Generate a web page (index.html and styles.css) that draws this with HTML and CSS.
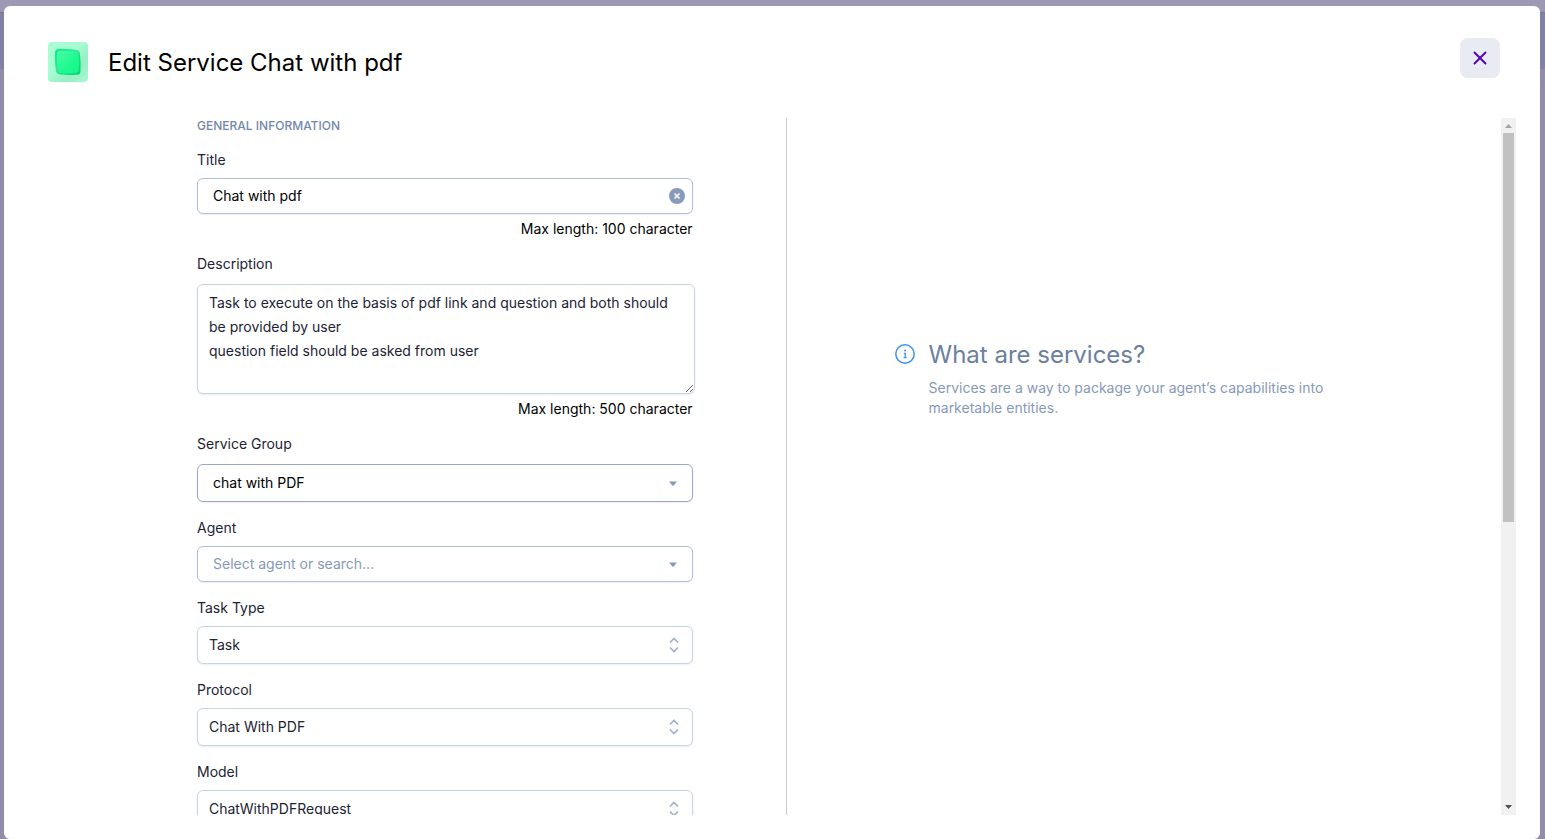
FILE: index.html
```
<!DOCTYPE html>
<html lang="en">
<head>
<meta charset="utf-8">
<title>Edit Service</title>
<meta name="viewport" content="width=device-width, initial-scale=1">
<link rel="stylesheet" href="styles.css">
</head>
<body>
<main class="modal" role="dialog" aria-labelledby="modal-title">
  <header class="modal-header">
    <svg class="service-icon" viewBox="0 0 40 40" aria-hidden="true">
      <defs>
        <linearGradient id="tile" x1="0" y1="0" x2="1" y2="1">
          <stop offset="0.4" stop-color="#a8fdd3"/><stop offset="0.7" stop-color="#98eec3"/><stop offset="1" stop-color="#a8fad2"/>
        </linearGradient>
        <linearGradient id="edge" x1="0" y1="0" x2="1" y2="1">
          <stop offset="0" stop-color="#02f582"/><stop offset="0.3" stop-color="#0cf58a"/><stop offset="0.45" stop-color="#3be39a"/><stop offset="0.6" stop-color="#12e583"/><stop offset="1" stop-color="#05cf70"/>
        </linearGradient>
        <linearGradient id="face" x1="0" y1="0" x2="1" y2="1">
          <stop offset="0" stop-color="#4dfba9"/><stop offset="0.6" stop-color="#1df98f"/><stop offset="1" stop-color="#0ffb87"/>
        </linearGradient>
      </defs>
      <rect width="40" height="40" rx="4" fill="url(#tile)"/>
      <path d="M10.500 7 Q20 6.500 28.500 8 Q31.500 8.500 31.800 11 Q33.200 20 32.500 29.500 Q32.200 32.500 29.500 32.800 Q20 33.200 12 32.500 Q8.500 32 8 29 Q6.500 20 7 10.500 Q7.300 7.300 10.500 7Z" fill="url(#edge)"/>
      <path d="M12 8.800 Q20 8.400 27.500 9.300 Q30.300 9.700 30.500 12 Q31.600 20 30.800 28 Q30.500 30.700 28 30.900 Q20 31.500 13 31 Q10.200 30.600 9.800 28 Q8.400 20 9 11.500 Q9.300 9 12 8.800Z" fill="url(#face)"/>
    </svg>
    <h1 class="modal-title" id="modal-title">Edit Service Chat with pdf</h1>
    <button class="close" type="button" aria-label="Close">
      <svg width="14" height="14" viewBox="0 0 14 14" aria-hidden="true"><path d="M1.500 1.500 L12.500 12.500 M12.500 1.500 L1.500 12.500" fill="none" stroke="#5200b8" stroke-width="1.900" stroke-linecap="round"/></svg>
    </button>
  </header>

  <div class="modal-body">
    <form class="form">
      <h2 class="section-title">GENERAL INFORMATION</h2>

      <div class="field">
        <label for="title">Title</label>
        <div class="control">
          <input class="box strong" id="title" type="text" value="Chat with pdf" maxlength="100">
          <button class="clear" type="button" aria-label="Clear title">
            <svg width="16" height="16" viewBox="0 0 16 16" aria-hidden="true"><circle cx="8" cy="8" r="8" fill="#869bbb"/><path d="M5.500 5.500 L10.500 10.500 M10.500 5.500 L5.500 10.500" stroke="#fff" stroke-width="1.600"/></svg>
          </button>
        </div>
        <p class="help">Max length: 100 character</p>
      </div>

      <div class="field roomy">
        <label for="description">Description</label>
        <textarea class="box area" id="description" maxlength="500">Task to execute on the basis of pdf link and question and both should be provided by user
question field should be asked from user</textarea>
        <p class="help">Max length: 500 character</p>
      </div>

      <div class="field roomy">
        <label for="group">Service Group</label>
        <div class="control">
          <select class="box strong tall focus" id="group"><option>chat with PDF</option></select>
          <svg class="mark" width="8" height="5" viewBox="0 0 8 5" aria-hidden="true"><path d="M0 0.500 H8 L4.700 4.500 Q4 5 3.300 4.500Z" fill="#869bbb"/></svg>
        </div>
      </div>

      <div class="field">
        <label for="agent">Agent</label>
        <div class="control">
          <input class="box strong" id="agent" type="text" placeholder="Select agent or search...">
          <svg class="mark" width="8" height="5" viewBox="0 0 8 5" aria-hidden="true"><path d="M0 0.500 H8 L4.700 4.500 Q4 5 3.300 4.500Z" fill="#869bbb"/></svg>
        </div>
      </div>

      <div class="field">
        <label for="task-type">Task Type</label>
        <div class="control">
          <select class="box tall" id="task-type"><option>Task</option></select>
          <svg class="mark updown" width="10" height="16" viewBox="0 0 10 16" aria-hidden="true"><path d="M1 5.500 L5 1.500 L9 5.500 M1 10.500 L5 14.500 L9 10.500" fill="none" stroke="#9fb0cb" stroke-width="1.700"/></svg>
        </div>
      </div>

      <div class="field">
        <label for="protocol">Protocol</label>
        <div class="control">
          <select class="box tall" id="protocol"><option>Chat With PDF</option></select>
          <svg class="mark updown" width="10" height="16" viewBox="0 0 10 16" aria-hidden="true"><path d="M1 5.500 L5 1.500 L9 5.500 M1 10.500 L5 14.500 L9 10.500" fill="none" stroke="#9fb0cb" stroke-width="1.700"/></svg>
        </div>
      </div>

      <div class="field">
        <label for="model">Model</label>
        <div class="control">
          <select class="box tall" id="model"><option>ChatWithPDFRequest</option></select>
          <svg class="mark updown" width="10" height="16" viewBox="0 0 10 16" aria-hidden="true"><path d="M1 5.500 L5 1.500 L9 5.500 M1 10.500 L5 14.500 L9 10.500" fill="none" stroke="#9fb0cb" stroke-width="1.700"/></svg>
        </div>
      </div>
    </form>

    <aside class="info">
      <svg class="info-icon" width="20" height="20" viewBox="0 0 20 20" aria-hidden="true"><circle cx="10" cy="10" r="9.200" fill="none" stroke="#3993ed" stroke-width="1.500"/><circle cx="10" cy="6.500" r="1" fill="#3993ed"/><path d="M8.800 9.300 H10.200 V13.500 M8.700 13.600 H11.600" fill="none" stroke="#3993ed" stroke-width="1.300"/></svg>
      <div class="info-text">
        <h2 class="info-title">What are services?</h2>
        <p class="info-copy">Services are a way to package your agent’s capabilities into marketable entities.</p>
      </div>
    </aside>

    <div class="scrollbar" aria-hidden="true">
      <svg class="arrow" viewBox="0 0 15 15"><path d="M4 10 L7.500 6 L11 10Z" fill="#a3a3a3"/></svg>
      <div class="track"><div class="thumb"></div></div>
      <svg class="arrow" viewBox="0 0 15 15"><path d="M4 5 L7.500 9 L11 5Z" fill="#505050"/></svg>
    </div>
  </div>
</main>
</body>
</html>
```
FILE: styles.css
```
* {
  box-sizing: border-box;
}

body {
  margin: 0;
  height: 100vh;
  padding: 6px 5px 0 4px;
  background: linear-gradient(#9d98b3 0 12px, #77779c 12px 13px, #8181a5 13px 69px, #928ca9 69px);
  color: #1c2333;
  font-family: Inter, "Noto Sans", sans-serif;
  font-size: 14px;
  line-height: 20px;
}

h1, h2, p {
  margin: 0;
  font-weight: 400;
}

button {
  border: 0;
  padding: 0;
  cursor: pointer;
}

svg {
  display: block;
}

.modal {
  display: flex;
  flex-direction: column;
  height: 100%;
  padding: 32px 24px 24px 44px;
  border-radius: 6px;
  background: #fff;
}

.modal-header {
  display: flex;
  align-items: flex-start;
  padding: 0 16px 34px 0;
}

.service-icon {
  width: 40px;
  height: 40px;
  margin-top: 4px;
}

.modal-title {
  flex: 1;
  margin: 4px 0 0 20px;
  color: #000;
  font-size: 24px;
  line-height: 42px;
}

.close {
  display: grid;
  place-items: center;
  width: 40px;
  height: 40px;
  border-radius: 8px;
  background: #e8ebf2;
}

.modal-body {
  flex: 1;
  display: grid;
  grid-template-columns: 1fr 1fr 15px;
  min-height: 0;
  padding-left: 24px;
}

.form {
  display: flex;
  flex-direction: column;
  gap: 16px;
  overflow-y: auto;
  scrollbar-width: none;
  padding: 0 13% 0 125px;
  border-right: 1px solid #c8cacf;
}

.section-title {
  color: #7388a9;
  font-size: 12px;
  font-weight: 500;
  line-height: 16px;
}

.field {
  display: flex;
  flex-direction: column;
  flex: none;
  gap: 8px;
}

.roomy {
  gap: 10px;
}

.control {
  position: relative;
}

.box {
  display: block;
  width: 100%;
  height: 36px;
  padding: 0 11px;
  border: 1px solid #c8d3e5;
  border-radius: 6px;
  background: #fff;
  box-shadow: 0 1px 2px rgba(16, 24, 40, 0.08);
  color: #1c2333;
  font: inherit;
  appearance: none;
}

.tall {
  height: 38px;
}

.strong {
  padding: 0 15px 2px;
  border-color: #b1c0d9;
  color: #000;
}

.focus {
  padding-bottom: 0;
  border-color: #97a9c6;
}

.strong::placeholder {
  color: #8799b8;
}

.area {
  width: calc(100% + 2px);
  height: 110px;
  padding: 6px 11px;
  line-height: 24px;
  resize: vertical;
}

.clear {
  position: absolute;
  top: 10px;
  right: 8px;
  border-radius: 50%;
  background: none;
}

.mark {
  position: absolute;
  top: 0;
  bottom: 0;
  right: 16px;
  margin: auto 0;
  pointer-events: none;
}

.updown {
  right: 14px;
}

.help {
  margin-top: -2px;
  color: #000;
  line-height: 18px;
  text-align: right;
}

.roomy .help {
  margin-top: -4px;
}

.info {
  display: flex;
  align-items: flex-start;
  gap: 14px;
  padding: 222px 108px 0;
}

.info-icon {
  flex: none;
  margin-top: 4px;
}

.info-text {
  max-width: 430px;
}

.info-title {
  color: #6c7f9e;
  font-size: 24px;
  line-height: 30px;
}

.info-copy {
  margin-top: 8px;
  color: #8799b8;
}

.scrollbar {
  display: flex;
  flex-direction: column;
  background: #f1f1f1;
}

.arrow {
  width: 15px;
  height: 15px;
}

.track {
  flex: 1;
  padding: 0 2px;
}

.thumb {
  height: 58.3%;
  background: #c1c1c1;
}
```
